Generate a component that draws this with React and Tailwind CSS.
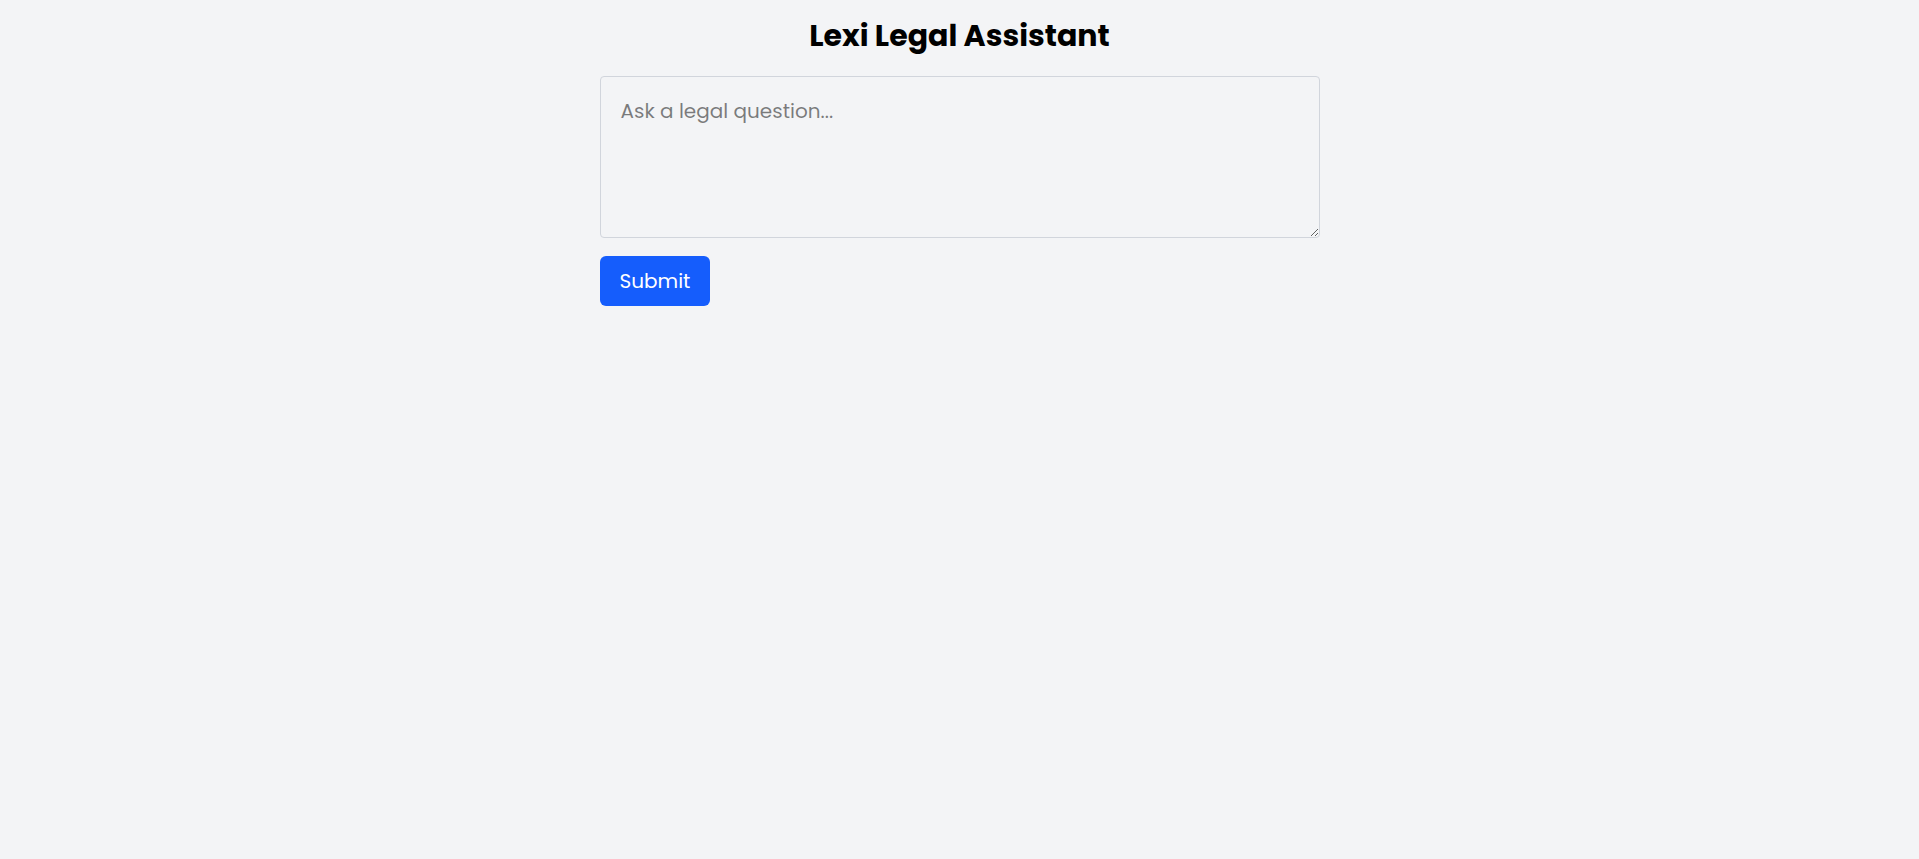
import React, { useState } from "react";

const App = () => {
  const [question, setQuestion] = useState("");

  const handleSubmit = (e) => {
    e.preventDefault();
  };

  return (
    <div
      className="min-h-screen bg-gray-100 pt-[18px] text-black"
      style={{ fontFamily: '"Poppins", "Inter", "Noto Sans", sans-serif' }}
    >
      <div className="mx-auto w-[720px]">
        {/* Header */}
        <h1 className="mb-[22px] text-center text-[30px] leading-9 font-bold">
          Lexi Legal Assistant
        </h1>

        <form onSubmit={handleSubmit}>
          <textarea
            value={question}
            onChange={(e) => setQuestion(e.target.value)}
            placeholder="Ask a legal question..."
            className="block h-[162px] w-full rounded border border-gray-300 px-5 py-5 text-[20px] leading-7"
          />
          <button
            type="submit"
            className="mt-[18px] h-[50px] rounded-md bg-blue-600 px-5 text-[20px] text-white"
          >
            Submit
          </button>
        </form>
      </div>
    </div>
  );
};

export default App;
